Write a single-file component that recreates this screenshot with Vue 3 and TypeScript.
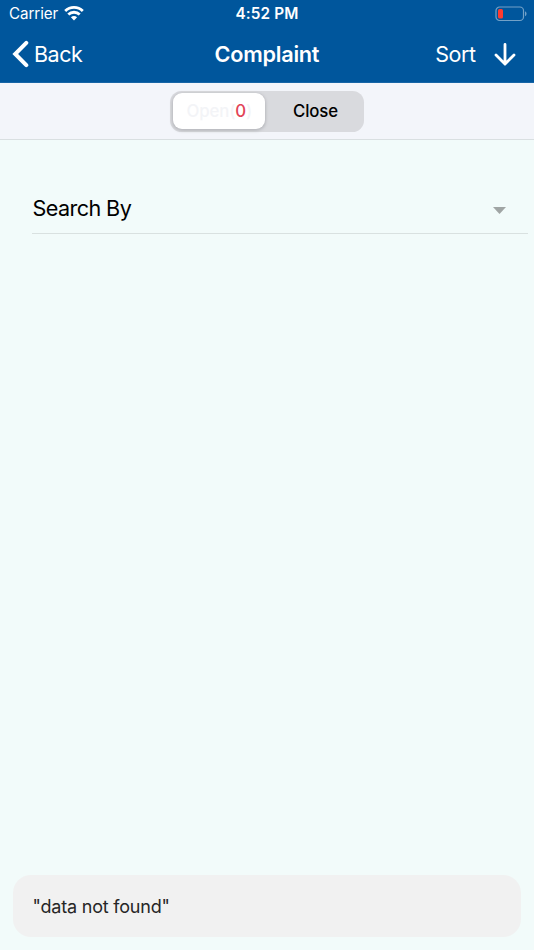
<script setup lang="ts">
import { ref } from 'vue'

const openCount = ref<number>(0)
const activeTab = ref<'open' | 'close'>('open')
const message = ref<string>('"data not found"')
</script>

<template>
  <div class="screen">
    <header class="header">
      <div class="status">
        <div class="carrier">
          <span class="carrier-name">Carrier</span>
          <svg class="wifi" width="20" height="15" viewBox="0 0 20 15">
            <g fill="none" stroke="#fff" stroke-width="2.8">
              <path d="M1.2 5 A12.6 12.6 0 0 1 18.8 5" />
              <path d="M4.3 8.6 A8.1 8.1 0 0 1 15.7 8.6" />
            </g>
            <path d="M10 14.5 L6.9 11.3 A4.7 4.7 0 0 1 13.1 11.3 Z" fill="#fff" />
          </svg>
        </div>
        <span class="time">4:52 PM</span>
        <svg class="battery" width="32" height="16" viewBox="0 0 32 16">
          <rect x="1" y="1" width="27.5" height="13.5" rx="3.6" fill="none" stroke="#fff" stroke-opacity=".45" stroke-width="1.2" />
          <rect x="3" y="3" width="5" height="9.6" rx="1.6" fill="#ff3b30" />
          <path d="M30 5.3 Q31.6 6.2 31.6 7.8 Q31.6 9.4 30 10.3 Z" fill="#fff" fill-opacity=".45" />
        </svg>
      </div>
      <nav class="nav">
        <button class="back">
          <svg width="17" height="28" viewBox="0 0 17 28">
            <path d="M14.3 2.8 L3.2 14 L14.3 25.2" fill="none" stroke="#fff" stroke-width="4" stroke-linecap="round" stroke-linejoin="miter" />
          </svg>
          <span class="back-label">Back</span>
        </button>
        <h1 class="title">Complaint</h1>
        <button class="sort">
          <span class="sort-label">Sort</span>
          <svg width="22" height="24" viewBox="0 0 22 24">
            <path d="M11 2.4 V21.9 M2 13 L11 22 L20 13" fill="none" stroke="#fff" stroke-width="2.8" stroke-linecap="round" />
          </svg>
        </button>
      </nav>
    </header>

    <div class="toolbar">
      <div class="segment">
        <button class="tab" :class="{ active: activeTab === 'open' }" @click="activeTab = 'open'">
          <span class="open-label">Open(<span class="count">{{ openCount }}</span>)</span>
        </button>
        <button class="tab" :class="{ active: activeTab === 'close' }" @click="activeTab = 'close'">
          <span class="close-label">Close</span>
        </button>
      </div>
    </div>

    <main class="content">
      <div class="search">
        <span class="search-label">Search By</span>
        <svg class="caret" width="13" height="7" viewBox="0 0 13 7">
          <path d="M0 0 H13 L6.5 7 Z" fill="#a0a5a4" />
        </svg>
      </div>
    </main>

    <footer class="notice"><span class="notice-text">{{ message }}</span></footer>
  </div>
</template>

<style>
body {
  background: #f2fbfa;
}
</style>

<style scoped>
.screen {
  display: flex;
  flex-direction: column;
  box-sizing: border-box;
  height: 950px;
  padding-bottom: 13px;
  background: #f2fbfa;
  font-family: Inter, 'Liberation Sans', sans-serif;
  color: #000;
}
button {
  margin: 0;
  padding: 0;
  border: 0;
  background: none;
  color: inherit;
  font: inherit;
}
span, h1 {
  white-space: nowrap;
}
svg {
  display: block;
  flex: none;
}
.header {
  box-sizing: border-box;
  height: 83px;
  background: #00569c;
  border-bottom: 1px solid #1765a6;
  color: #fff;
}
.status, .nav {
  display: grid;
  grid-template-columns: 1fr auto 1fr;
  align-items: center;
}
.status {
  height: 27px;
  padding: 0 7px 0 9px;
}
.time {
  margin-right: 2px;
  font-size: 15.3px;
  font-weight: 600;
  letter-spacing: 0.15px;
}
.nav {
  height: 54px;
  padding: 0 18px 0 12px;
  grid-template-columns: 202.5px 1fr 160px;
}
.carrier {
  display: flex;
  align-items: center;
  gap: 6px;
}
.carrier-name {
  width: 49px;
  font-size: 15.2px;
  letter-spacing: -0.1px;
}
.battery {
  justify-self: end;
}
.back {
  display: flex;
  align-items: center;
  gap: 5px;
}
.back-label, .sort-label {
  font-size: 21.5px;
  letter-spacing: -0.45px;
}
.title {
  margin: 0;
  font-size: 21.7px;
  font-weight: 600;
  letter-spacing: -0.25px;
}
.sort {
  display: flex;
  align-items: center;
  justify-content: flex-end;
  gap: 18px;
}
.sort svg {
  margin-right: 0.5px;
}
.toolbar {
  display: flex;
  box-sizing: border-box;
  height: 57px;
  justify-content: center;
  padding-top: 7.5px;
  background: #f3f5fa;
  border-bottom: 1px solid #d9dfe1;
}
.segment {
  display: flex;
  box-sizing: border-box;
  width: 193.5px;
  height: 41px;
  padding: 2.5px;
  border-radius: 11.5px;
  background: #d9dade;
}
.tab {
  flex: 1;
  padding-left: 5px;
  border-radius: 9px;
  font-size: 16.8px;
  font-weight: 500;
  letter-spacing: -0.1px;
}
.tab.active {
  flex: 0 0 92px;
  padding-left: 1px;
  background: #fff;
  box-shadow: 0 1px 3px 1px #b9babf;
  color: #f3f4f7;
  box-sizing: border-box;
}
.count {
  color: #e24357;
}
.content {
  flex: 1;
  padding: 43px 6px 0 32px;
}
.search {
  display: flex;
  box-sizing: border-box;
  height: 51px;
  align-items: center;
  justify-content: space-between;
  padding-right: 22.5px;
  border-bottom: 1px solid #d9e1e0;
}
.search-label {
  margin-left: 0.6px;
  font-size: 21.6px;
  letter-spacing: -0.6px;
}
.caret {
  margin-top: 5px;
}
.notice {
  display: flex;
  box-sizing: border-box;
  height: 62px;
  align-items: center;
  margin: 0 13px;
  padding-left: 19.5px;
  border-radius: 18px;
  background: #f1f1f1;
  color: #262626;
}
.notice-text {
  font-size: 18px;
  letter-spacing: -0.2px;
}
</style>
